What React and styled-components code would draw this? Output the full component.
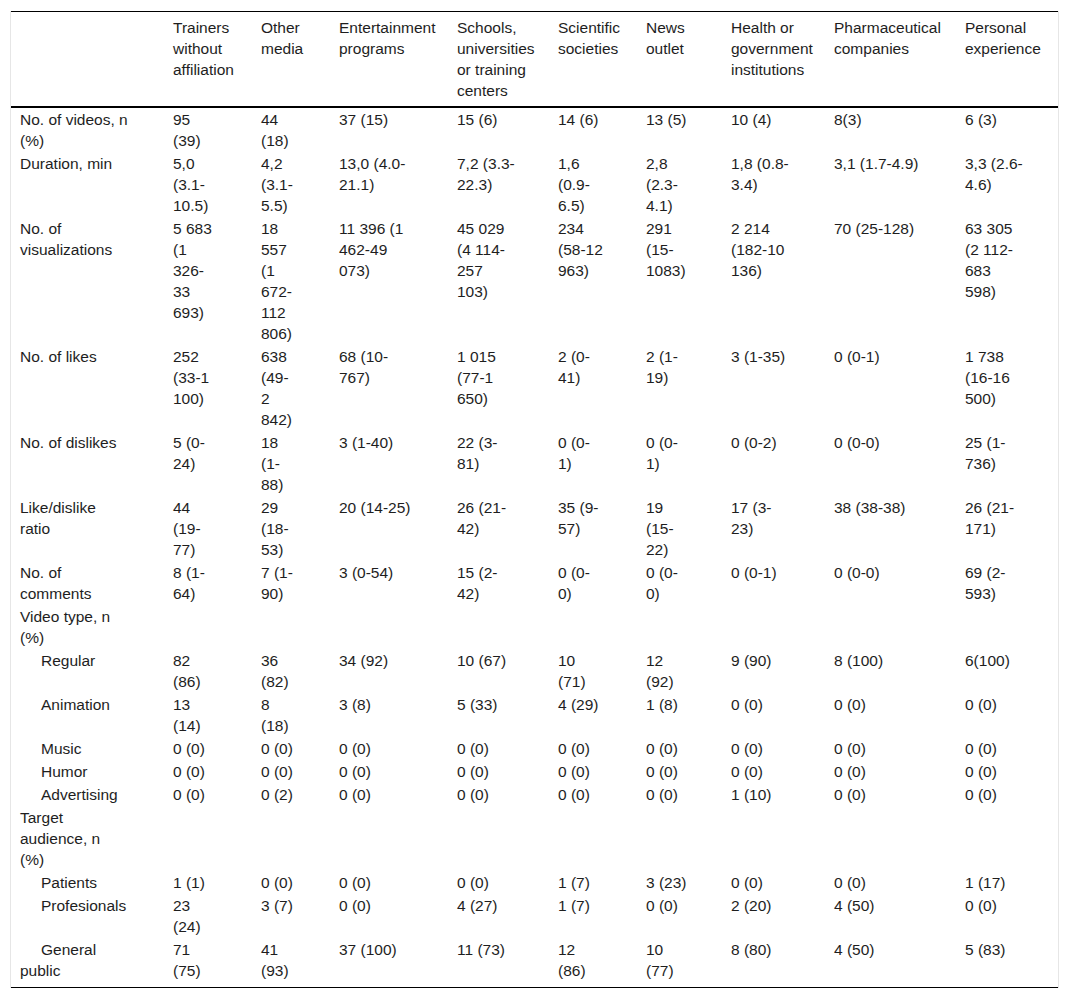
import React from "react";
import styled, { createGlobalStyle } from "styled-components";

const GlobalStyle = createGlobalStyle`
  html, body { margin: 0; padding: 0; background: #ffffff; }
  body { font-family: "Liberation Sans", Arial, Helvetica, sans-serif; }
`;

const Page = styled.div`
  padding: 11px 10px 0 10px;
`;

const Frame = styled.div`
  width: 1049px;
  box-sizing: border-box;
  border-left: 1px solid #e6e6e6;
  border-right: 1px solid #e6e6e6;
`;

const Table = styled.table`
  width: 100%;
  border-collapse: collapse;
  table-layout: fixed;
  border-top: 1px solid #000;
  border-bottom: 1px solid #000;
  font-size: 15.5px;
  line-height: 21px;
  color: #1e1e1e;
`;

const Col = styled.col`
  width: ${(p) => p.$w}px;
`;

const HeadCell = styled.th`
  text-align: left;
  font-weight: normal;
  vertical-align: top;
  padding: 5px 6px 5px 9px;
  white-space: pre-line;
  border-bottom: 2px solid #000;
`;

const Row = styled.tr`
  &:last-child td {
    padding-bottom: 6px;
  }
`;

const Cell = styled.td`
  vertical-align: top;
  padding: 1px 6px 1px 9px;
  white-space: pre-line;
  text-indent: ${(p) => (p.$indent ? "21px" : "0")};
`;

const widths = [153, 88, 78, 118, 101, 88, 85, 103, 131, 102];

const headers = [
  "",
  "Trainers\nwithout\naffiliation",
  "Other\nmedia",
  "Entertainment\nprograms",
  "Schools,\nuniversities\nor training\ncenters",
  "Scientific\nsocieties",
  "News\noutlet",
  "Health or\ngovernment\ninstitutions",
  "Pharmaceutical\ncompanies",
  "Personal\nexperience",
];

const Z = "0 (0)";
const E = "";

const rows = [
  { label: "No. of videos, n\n(%)", values: ["95\n(39)", "44\n(18)", "37 (15)", "15 (6)", "14 (6)", "13 (5)", "10 (4)", "8(3)", "6 (3)"] },
  { label: "Duration, min", values: ["5,0\n(3.1-\n10.5)", "4,2\n(3.1-\n5.5)", "13,0 (4.0-\n21.1)", "7,2 (3.3-\n22.3)", "1,6\n(0.9-\n6.5)", "2,8\n(2.3-\n4.1)", "1,8 (0.8-\n3.4)", "3,1 (1.7-4.9)", "3,3 (2.6-\n4.6)"] },
  { label: "No. of\nvisualizations", values: ["5 683\n(1\n326-\n33\n693)", "18\n557\n(1\n672-\n112\n806)", "11 396 (1\n462-49\n073)", "45 029\n(4 114-\n257\n103)", "234\n(58-12\n963)", "291\n(15-\n1083)", "2 214\n(182-10\n136)", "70 (25-128)", "63 305\n(2 112-\n683\n598)"] },
  { label: "No. of likes", values: ["252\n(33-1\n100)", "638\n(49-\n2\n842)", "68 (10-\n767)", "1 015\n(77-1\n650)", "2 (0-\n41)", "2 (1-\n19)", "3 (1-35)", "0 (0-1)", "1 738\n(16-16\n500)"] },
  { label: "No. of dislikes", values: ["5 (0-\n24)", "18\n(1-\n88)", "3 (1-40)", "22 (3-\n81)", "0 (0-\n1)", "0 (0-\n1)", "0 (0-2)", "0 (0-0)", "25 (1-\n736)"] },
  { label: "Like/dislike\nratio", values: ["44\n(19-\n77)", "29\n(18-\n53)", "20 (14-25)", "26 (21-\n42)", "35 (9-\n57)", "19\n(15-\n22)", "17 (3-\n23)", "38 (38-38)", "26 (21-\n171)"] },
  { label: "No. of\ncomments", values: ["8 (1-\n64)", "7 (1-\n90)", "3 (0-54)", "15 (2-\n42)", "0 (0-\n0)", "0 (0-\n0)", "0 (0-1)", "0 (0-0)", "69 (2-\n593)"] },
  { label: "Video type, n\n(%)", values: [E, E, E, E, E, E, E, E, E] },
  { label: "Regular", indent: true, values: ["82\n(86)", "36\n(82)", "34 (92)", "10 (67)", "10\n(71)", "12\n(92)", "9 (90)", "8 (100)", "6(100)"] },
  { label: "Animation", indent: true, values: ["13\n(14)", "8\n(18)", "3 (8)", "5 (33)", "4 (29)", "1 (8)", Z, Z, Z] },
  { label: "Music", indent: true, values: [Z, Z, Z, Z, Z, Z, Z, Z, Z] },
  { label: "Humor", indent: true, values: [Z, Z, Z, Z, Z, Z, Z, Z, Z] },
  { label: "Advertising", indent: true, values: [Z, "0 (2)", Z, Z, Z, Z, "1 (10)", Z, Z] },
  { label: "Target\naudience, n\n(%)", values: [E, E, E, E, E, E, E, E, E] },
  { label: "Patients", indent: true, values: ["1 (1)", Z, Z, Z, "1 (7)", "3 (23)", Z, Z, "1 (17)"] },
  { label: "Profesionals", indent: true, values: ["23\n(24)", "3 (7)", Z, "4 (27)", "1 (7)", Z, "2 (20)", "4 (50)", Z] },
  { label: "General\npublic", indent: true, values: ["71\n(75)", "41\n(93)", "37 (100)", "11 (73)", "12\n(86)", "10\n(77)", "8 (80)", "4 (50)", "5 (83)"] },
];

export default function App() {
  return (
    <>
      <GlobalStyle />
      <Page>
        <Frame>
          <Table>
            <colgroup>
              {widths.map((w, i) => (
                <Col key={i} $w={w} />
              ))}
            </colgroup>
            <thead>
              <tr>
                {headers.map((h, i) => (
                  <HeadCell key={i}>{h}</HeadCell>
                ))}
              </tr>
            </thead>
            <tbody>
              {rows.map((r, i) => (
                <Row key={i}>
                  <Cell $indent={r.indent}>{r.label}</Cell>
                  {r.values.map((v, j) => (
                    <Cell key={j}>{v}</Cell>
                  ))}
                </Row>
              ))}
            </tbody>
          </Table>
        </Frame>
      </Page>
    </>
  );
}
